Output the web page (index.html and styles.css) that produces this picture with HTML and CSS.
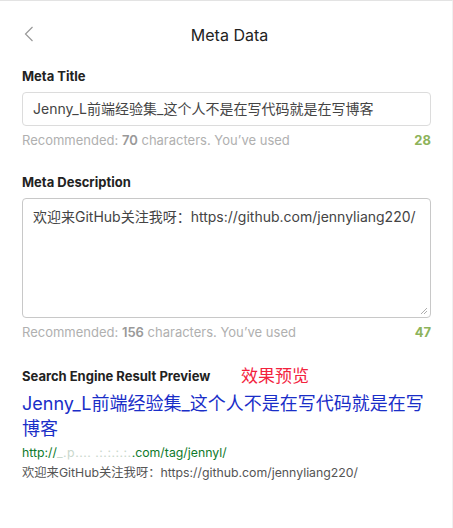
FILE: index.html
```html
<!DOCTYPE html>
<html lang="zh">
<head>
<meta charset="utf-8">
<link rel="stylesheet" href="styles.css">
</head>
<body>
<div class="panel">
  <header class="head">
    <span class="back"><svg width="10" height="16" viewBox="0 0 10 16"><path d="M8.5 1 L1.5 8 L8.5 15" fill="none" stroke="#999" stroke-width="1.2"/></svg></span>
    <h1 class="title">Meta Data</h1>
  </header>

  <section class="field">
    <label class="label">Meta Title</label>
    <div class="input">Jenny_L前端经验集_这个人不是在写代码就是在写博客</div>
    <div class="hint"><span>Recommended: <b>70</b> characters. You’ve used</span><span class="count">28</span></div>
  </section>

  <section class="field field-desc">
    <label class="label">Meta Description</label>
    <div class="textarea">欢迎来GitHub关注我呀：https://github.com/jennyliang220/
      <svg class="grip" width="8" height="8" viewBox="0 0 8 8"><path d="M7 1 L1 7 M7 4 L4 7" stroke="#999" stroke-width="0.8"/></svg>
    </div>
    <div class="hint"><span>Recommended: <b>156</b> characters. You’ve used</span><span class="count">47</span></div>
  </section>

  <section class="preview">
    <div class="prev-head"><span class="label">Search Engine Result Preview</span><span class="note">效果预览</span></div>
    <div class="serp-title">Jenny_L前端经验集_这个人不是在写代码就是在写博客</div>
    <div class="serp-url">http://<span class="blur">_.p.... .:.:.:.:.</span>.com/tag/jennyl/</div>
    <div class="serp-desc">欢迎来GitHub关注我呀：https://github.com/jennyliang220/</div>
  </section>
</div>
</body>
</html>
```

FILE: styles.css
```css
html, body { margin: 0; padding: 0; background: #fff; }
body {
  font-family: Inter, "Noto Sans CJK SC", sans-serif;
  color: #333;
  width: 453px;
  height: 528px;
  overflow: hidden;
}
.panel {
  box-sizing: border-box;
  height: 528px;
  border-top: 1px solid #e3e3e3;
  border-right: 1px solid #f0f0f0;
  padding: 0 21px 0 22px;
}
.head {
  position: relative;
  height: 66px;
  display: flex;
  align-items: center;
  justify-content: center;
}
.back {
  position: absolute;
  left: 2px;
  top: 25px;
  display: flex;
}
.title {
  margin: 0;
  font-size: 16px;
  font-weight: normal;
  color: #222;
  padding: 2px 0 0 6px;
}
.label {
  display: block;
  font-size: 13px;
  font-weight: 700;
  color: #222;
  line-height: 18px;
}
.input {
  margin-top: 7px;
  box-sizing: border-box;
  height: 34px;
  border: 1px solid #dcdcdc;
  border-radius: 4px;
  padding: 0 10px;
  font-size: 14px;
  line-height: 32px;
  color: #444;
}
.field-desc { margin-top: 2px; }
.textarea {
  position: relative;
  margin-top: 7px;
  box-sizing: border-box;
  height: 120px;
  border: 1px solid #c8c8c8;
  border-radius: 4px;
  padding: 8px 10px;
  font-size: 14px;
  line-height: 20px;
  color: #444;
}
.grip { position: absolute; right: 2px; bottom: 2px; }
.hint {
  display: flex;
  justify-content: space-between;
  font-size: 13px;
  color: #b0b0b0;
  line-height: 18px;
  margin-top: 5px;
  height: 40px;
}
.hint b { color: #999; font-weight: 600; }
.count { color: #8db35a; font-weight: 700; }
.preview { margin-top: 4px; }
.prev-head { display: flex; align-items: center; }
.prev-head .label { display: inline; width: 219px; }
.note { color: #f3223d; font-size: 17px; line-height: 18px; }
.serp-title {
  margin-top: 6px;
  font-size: 18px;
  line-height: 25px;
  color: #1a2ec8;
}
.serp-url {
  margin-top: 2px;
  font-size: 12.3px;
  line-height: 20px;
  color: #0e7a2b;
}
.blur { color: #c9d8cc; letter-spacing: 0.5px; }
.serp-desc {
  font-size: 12.3px;
  line-height: 20px;
  color: #555;
}
```
